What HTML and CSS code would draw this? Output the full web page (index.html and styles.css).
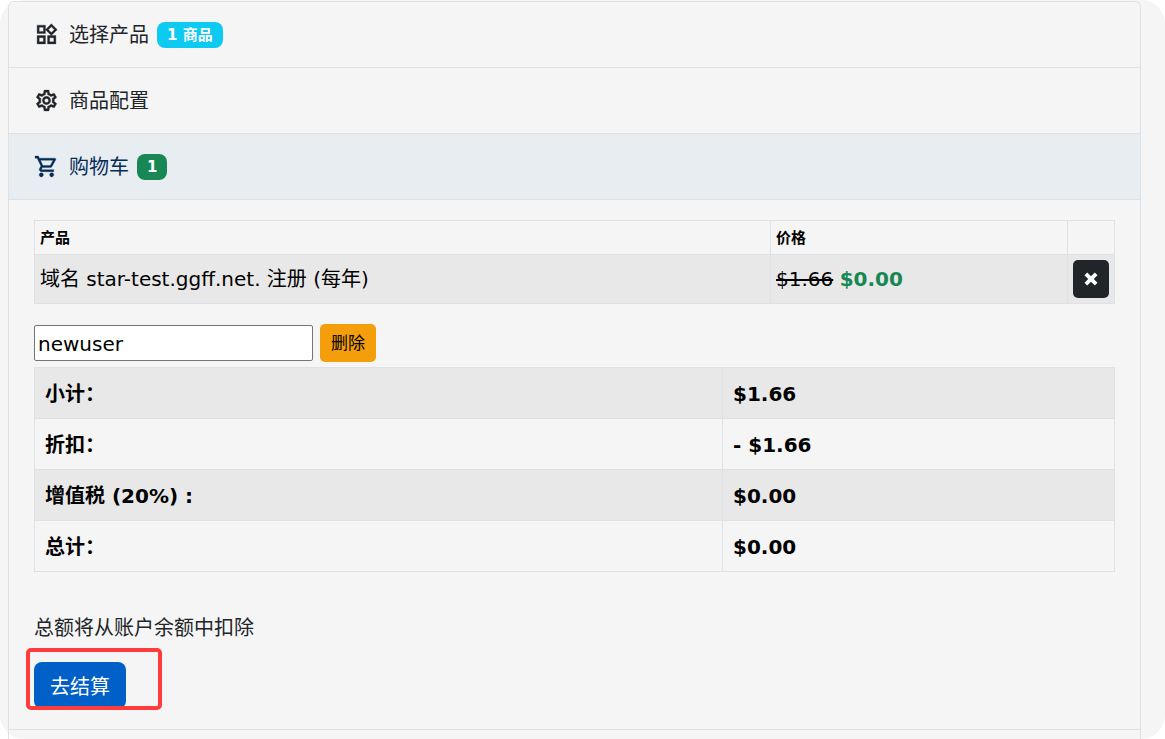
FILE: index.html
```html
<!DOCTYPE html>
<html lang="zh-CN">
<head>
    <meta charset="UTF-8">
    <meta name="viewport" content="width=device-width, initial-scale=1.0">
    <title>购物车</title>
    <link rel="stylesheet" href="styles.css">
</head>
<body>
    <main class="page">
        <div class="accordion">
            <button type="button" class="accordion-header">
                <svg class="icon" viewBox="0 0 24 24" aria-hidden="true"><path d="M16.66 4.52l2.83 2.83-2.83 2.83-2.83-2.83 2.83-2.83M9 5v4H5V5h4m10 10v4h-4v-4h4M9 15v4H5v-4h4m7.66-13.31L11 7.34 16.66 13l5.66-5.66-5.66-5.65zM11 3H3v8h8V3zm10 10h-8v8h8v-8zm-10 0H3v8h8v-8z"/></svg>
                <span>选择产品</span>
                <span class="badge badge-info">1 商品</span>
            </button>
            <button type="button" class="accordion-header">
                <svg class="icon" viewBox="0 0 24 24" aria-hidden="true"><path d="M19.43 12.98c.04-.32.07-.64.07-.98 0-.34-.03-.66-.07-.98l2.11-1.65c.19-.15.24-.42.12-.64l-2-3.46c-.09-.16-.26-.25-.44-.25-.06 0-.12.01-.17.03l-2.49 1c-.52-.4-1.08-.73-1.69-.98l-.38-2.65C14.46 2.18 14.25 2 14 2h-4c-.25 0-.46.18-.49.42l-.38 2.65c-.61.25-1.17.59-1.69.98l-2.49-1c-.06-.02-.12-.03-.18-.03-.17 0-.34.09-.43.25l-2 3.46c-.13.22-.07.49.12.64l2.11 1.65c-.04.32-.07.65-.07.98 0 .33.03.66.07.98l-2.11 1.65c-.19.15-.24.42-.12.64l2 3.46c.09.16.26.25.44.25.06 0 .12-.01.17-.03l2.49-1c.52.4 1.08.73 1.69.98l.38 2.65c.03.24.24.42.49.42h4c.25 0 .46-.18.49-.42l.38-2.65c.61-.25 1.17-.59 1.69-.98l2.49 1c.06.02.12.03.18.03.17 0 .34-.09.43-.25l2-3.46c.12-.22.07-.49-.12-.64l-2.11-1.65zm-1.98-1.71c.04.31.05.52.05.73 0 .21-.02.43-.05.73l-.14 1.13.89.7 1.08.84-.7 1.21-1.27-.51-1.04-.42-.9.68c-.43.32-.84.56-1.25.73l-1.06.43-.16 1.13-.2 1.35h-1.4l-.19-1.35-.16-1.13-1.06-.43c-.43-.18-.83-.41-1.23-.71l-.91-.7-1.06.43-1.27.51-.7-1.21 1.08-.84.89-.7-.14-1.13c-.03-.31-.05-.54-.05-.74s.02-.43.05-.73l.14-1.13-.89-.7-1.08-.84.7-1.21 1.27.51 1.04.42.9-.68c.43-.32.84-.56 1.25-.73l1.06-.43.16-1.13.2-1.35h1.39l.19 1.35.16 1.13 1.06.43c.43.18.83.41 1.23.71l.91.7 1.06-.43 1.27-.51.7 1.21-1.07.85-.89.7.14 1.13zM12 8c-2.21 0-4 1.79-4 4s1.79 4 4 4 4-1.79 4-4-1.79-4-4-4zm0 6c-1.1 0-2-.9-2-2s.9-2 2-2 2 .9 2 2-.9 2-2 2z"/></svg>
                <span>商品配置</span>
            </button>
            <button type="button" class="accordion-header active" aria-expanded="true">
                <svg class="icon" viewBox="0 0 24 24" aria-hidden="true"><path d="M15.55 13c.75 0 1.41-.41 1.75-1.03l3.58-6.49c.37-.66-.11-1.48-.87-1.48H5.21l-.94-2H1v2h2l3.6 7.59-1.35 2.44C4.52 15.37 5.48 17 7 17h12v-2H7l1.1-2h7.45zM6.16 6h12.15l-2.76 5H8.53L6.16 6zM7 18c-1.1 0-1.99.9-1.99 2S5.9 22 7 22s2-.9 2-2-.9-2-2-2zm10 0c-1.1 0-1.99.9-1.99 2s.89 2 1.99 2 2-.9 2-2-.9-2-2-2z"/></svg>
                <span>购物车</span>
                <span class="badge badge-success">1</span>
            </button>

            <div class="accordion-body">
                <table class="table cart-table">
                    <thead>
                        <tr>
                            <th>产品</th>
                            <th class="col-price">价格</th>
                            <th class="col-action"></th>
                        </tr>
                    </thead>
                    <tbody>
                        <tr>
                            <td>域名 star-test.ggff.net. 注册 (每年)</td>
                            <td><del>$1.66</del> <strong class="price-new">$0.00</strong></td>
                            <td>
                                <button type="button" class="btn btn-dark" aria-label="移除">
                                    <svg class="icon-x" viewBox="0 0 14 14" aria-hidden="true"><path d="M3 3l8 8M11 3l-8 8"/></svg>
                                </button>
                            </td>
                        </tr>
                    </tbody>
                </table>

                <form class="promo">
                    <input type="text" class="promo-input" name="promo" value="newuser" aria-label="优惠码">
                    <button type="button" class="btn btn-warning">删除</button>
                </form>

                <table class="table totals-table">
                    <tbody>
                        <tr><th scope="row">小计：</th><td>$1.66</td></tr>
                        <tr><th scope="row">折扣：</th><td>- $1.66</td></tr>
                        <tr><th scope="row">增值税 (20%) :</th><td>$0.00</td></tr>
                        <tr><th scope="row">总计：</th><td>$0.00</td></tr>
                    </tbody>
                </table>

                <p class="note">总额将从账户余额中扣除</p>
                <div class="checkout">
                    <button type="button" class="btn btn-primary">去结算</button>
                    <span class="highlight"></span>
                </div>
            </div>
        </div>
    </main>
</body>
</html>
```
FILE: styles.css
```css
* { box-sizing: border-box; }
body { margin: 0; background: #fff; color: #212529; font-family: "DejaVu Sans", "Noto Sans CJK SC", sans-serif; font-size: 20px; line-height: 30px; }
button, input { font: inherit; }

.page { min-height: 100vh; padding: 1px 24px 0 8px; background: #f5f5f5; border-radius: 24px; display: flex; }
.accordion { flex: 1; border: 1px solid #dee2e6; border-bottom: none; border-radius: 6px 6px 0 0; }
.accordion-header { display: flex; align-items: center; gap: 8px; width: 100%; height: 66px; padding: 0 25px; border: none; border-bottom: 1px solid #dee2e6; background: transparent; color: #212529; text-align: left; cursor: pointer; }
.accordion-header.active { background: #e8edf1; color: #052c56; }
.icon { width: 25px; height: 25px; margin-right: 2px; fill: currentColor; stroke: currentColor; stroke-width: 0.3; }
.accordion-body { padding: 20px 25px; border-bottom: 1px solid #dee2e6; }

.badge { padding: 5px 10px; border-radius: 8px; color: #fff; font-size: 15px; font-weight: bold; line-height: 16px; }
.badge-info { background: #0dcaf0; }
.badge-success { background: #198754; }

.table { width: 100%; border-collapse: collapse; color: #000; }
.table th, .table td { border: 1px solid #dee2e6; text-align: left; }
.cart-table th { padding: 5px 5px 3px; font-size: 15px; line-height: 25px; }
.cart-table td { padding: 5px; }
.cart-table tbody tr, .totals-table tr:nth-child(odd) { background: #e8e8e8; }
.cart-table .col-price { width: 297px; }
.cart-table .col-action { width: 47px; }
.price-new { color: #198754; }

.btn { border: none; cursor: pointer; }
.btn-dark { display: flex; align-items: center; justify-content: center; width: 36px; height: 38px; padding: 0; border-radius: 5px; background: #212529; }
.icon-x { width: 18px; height: 18px; fill: none; stroke: #fff; stroke-width: 3; }
.btn-warning { height: 38px; padding: 0 11px; border-radius: 5px; background: #f59e0b; color: #000; font-size: 17px; }
.btn-primary { display: block; height: 47px; padding: 3px 16px 0; border-radius: 8px; background: #0060c8; color: #fff; }

.promo { display: flex; align-items: center; gap: 7px; margin: 20px 0 5px; }
.promo-input { width: 279px; height: 36px; padding: 2px 3px 0; border: 1px solid #767676; border-radius: 2px; background: #fff; color: #000; }

.totals-table th, .totals-table td { padding: 11px 10px 9px; font-weight: bold; }
.totals-table th { width: 688px; }

.note { margin: 41px 0 19px; }
.checkout { position: relative; width: fit-content; }
/* red frame drawn over the checkout button */
.highlight { position: absolute; top: -14px; left: -8px; width: 136px; height: 62px; border: 4px solid #ff3b3b; border-radius: 5px; pointer-events: none; }
```
